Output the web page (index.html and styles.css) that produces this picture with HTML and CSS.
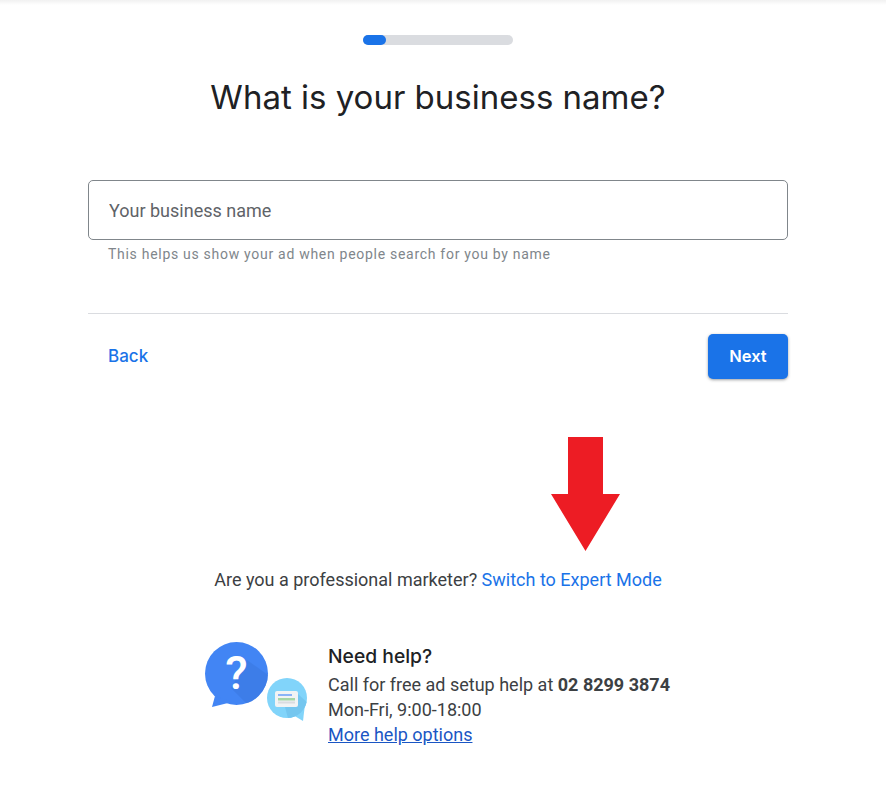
FILE: index.html
```html
<!DOCTYPE html>
<html lang="en">
<head>
    <meta charset="UTF-8">
    <meta name="viewport" content="width=device-width, initial-scale=1.0">
    <title>What is your business name?</title>
    <link rel="stylesheet" href="styles.css">
</head>
<body>
    <div class="top-shade"></div>
    <main class="page">
        <div class="progress"><div class="progress-fill"></div></div>
        <h1 class="title">What is your business name?</h1>

        <div class="form">
            <div class="field">
                <input class="field-input" type="text" placeholder="Your business name">
            </div>
            <p class="hint">This helps us show your ad when people search for you by name</p>
            <div class="actions">
                <a class="back" href="#">Back</a>
                <button class="next">Next</button>
            </div>
        </div>

        <p class="expert">Are you a professional marketer? <a href="#">Switch to Expert Mode</a></p>

        <section class="help">
            <svg class="help-icon" width="104" height="82" viewBox="0 0 104 82">
                <defs>
                    <clipPath id="bigClip"><circle cx="31.5" cy="31.5" r="31.5"/></clipPath>
                    <clipPath id="smallClip"><circle cx="82" cy="56" r="20"/></clipPath>
                </defs>
                <circle cx="31.5" cy="31.5" r="31.5" fill="#4285f4"/>
                <path d="M10 54 L7 65 L27 60 Z" fill="#4285f4"/>
                <path d="M42 18 L70 38 V70 L42 62 L26 46 Z" fill="#3b78e0" opacity="0.6" clip-path="url(#bigClip)"/>
                <text class="help-mark" x="31.5" y="47" text-anchor="middle">?</text>
                <circle cx="82" cy="56" r="20" fill="#81d4fa"/>
                <path d="M88 73 L98 79 L100 62 Z" fill="#81d4fa"/>
                <path d="M93 52 L106 64 V80 H84 L80 65 Z" fill="#74c6ef" clip-path="url(#smallClip)"/>
                <rect x="70" y="49" width="23" height="16" rx="2" fill="#f1f3f4"/>
                <rect x="73" y="52" width="14" height="2" fill="#8ab4f8"/>
                <rect x="73" y="56" width="17" height="2.5" fill="#a5d6a7"/>
                <rect x="73" y="59.5" width="17" height="2" fill="#dadce0"/>
            </svg>
            <div class="help-text">
                <h2>Need help?</h2>
                <p>Call for free ad setup help at <b>02 8299 3874</b></p>
                <p>Mon-Fri, 9:00-18:00</p>
                <a href="#">More help options</a>
            </div>
        </section>
    </main>

    <svg class="arrow" width="69" height="114" viewBox="0 0 69 114">
        <path d="M17 0 H52 V57 H69 L34.5 114 L0 57 H17 Z" fill="#ed1c24"/>
    </svg>
</body>
</html>
```

FILE: styles.css
```css
body {
    margin: 0;
    background: #fff;
    font-family: Roboto, "Liberation Sans", sans-serif;
    color: #3c4043;
}
.top-shade {
    position: absolute;
    top: 0;
    left: 0;
    right: 0;
    height: 5px;
    background: linear-gradient(#f1f1f1, #fff);
}
.page {
    width: 876px;
    display: flex;
    flex-direction: column;
    align-items: center;
}
.progress {
    width: 150px;
    height: 10px;
    margin-top: 35px;
    border-radius: 5px;
    background: #dadce0;
}
.progress-fill {
    width: 23px;
    height: 10px;
    border-radius: 5px;
    background: #1a73e8;
}
.title {
    margin: 29px 0 0;
    font-family: Inter, Roboto, sans-serif;
    font-size: 33px;
    line-height: 46px;
    font-weight: 400;
    color: #202124;
}
.form {
    width: 700px;
    margin-top: 60px;
}
.field-input {
    display: block;
    box-sizing: border-box;
    width: 100%;
    height: 60px;
    padding: 0 20px;
    border: 1px solid #80868b;
    border-radius: 5px;
    font-family: inherit;
    font-size: 18px;
    outline: none;
}
.field-input::placeholder {
    color: #5f6368;
    opacity: 1;
}
.hint {
    margin: 4px 0 0 20px;
    font-size: 14px;
    line-height: 20px;
    letter-spacing: 0.71px;
    color: #80868b;
}
.actions {
    display: flex;
    justify-content: space-between;
    align-items: center;
    margin-top: 49px;
    padding-top: 20px;
    border-top: 1px solid #dadce0;
}
.back {
    margin: 0 0 2px 20px;
    font-family: Inter, Roboto, sans-serif;
    font-size: 17px;
    font-weight: 500;
    color: #1a73e8;
    text-decoration: none;
}
.next {
    width: 80px;
    height: 45px;
    padding: 0 0 2px;
    border: none;
    border-radius: 5px;
    background: #1a73e8;
    color: #fff;
    font-family: Inter, Roboto, sans-serif;
    font-size: 16.5px;
    font-weight: 600;
    box-shadow: 0 1px 3px rgba(60, 64, 67, 0.5);
}
.expert {
    margin: 189px 0 0;
    font-size: 18px;
    line-height: 24px;
}
.expert a {
    color: #1a73e8;
    text-decoration: none;
}
.help {
    display: flex;
    gap: 19px;
    width: 466px;
    margin-top: 39px;
}
.help-icon {
    margin-top: 11px;
    flex: none;
}
.help-mark {
    font-family: Roboto, sans-serif;
    font-size: 46px;
    font-weight: 500;
    fill: #fff;
}
.help-text {
    padding-top: 11px;
}
.help-text h2 {
    margin: 0 0 2px;
    font-family: Inter, Roboto, sans-serif;
    font-size: 19.3px;
    line-height: 28px;
    font-weight: 500;
    color: #202124;
}
.help-text p {
    margin: 0;
    font-size: 18px;
    line-height: 25px;
}
.help-text b {
    font-weight: 700;
}
.help-text a {
    display: block;
    font-size: 18px;
    line-height: 25px;
    color: #1a56c4;
}
.arrow {
    position: absolute;
    left: 551px;
    top: 437px;
}
```
